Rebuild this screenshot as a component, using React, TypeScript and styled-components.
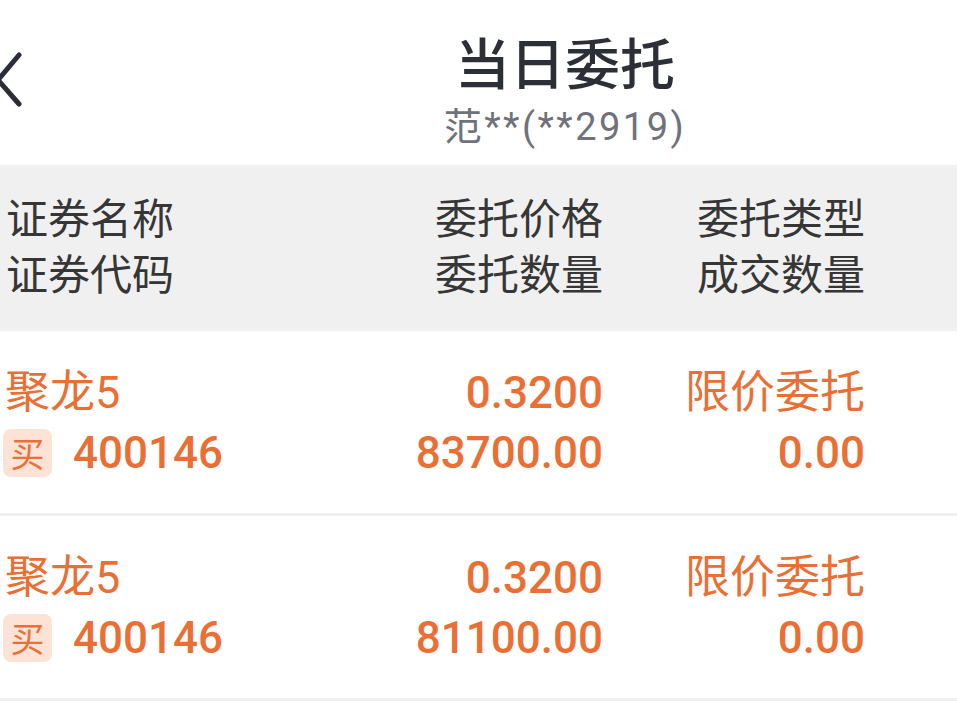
import React from "react";
import styled, { createGlobalStyle } from "styled-components";

const Global = createGlobalStyle`
  html, body { margin: 0; padding: 0; background: #ffffff; }
  body { font-family: Roboto, "Noto Sans CJK SC", sans-serif; }
  * { box-sizing: border-box; }
`;

const Page = styled.div`
  width: 957px;
  height: 708px;
  overflow: hidden;
  background: #fff;
`;

const Header = styled.header`
  height: 165px;
  display: grid;
  grid-template-columns: 173px 1fr;
  align-items: start;
`;

const Back = styled.div`
  display: flex;
  align-items: center;
  margin-left: -6px;
  margin-top: 50px;
`;

const TitleBlock = styled.div`
  display: flex;
  flex-direction: column;
  align-items: center;
  padding-top: 34px;
`;

const Title = styled.h1`
  margin: 0;
  font-family: Roboto, "Noto Sans CJK SC", sans-serif;
  font-size: 55px;
  line-height: 62px;
  font-weight: 500;
  color: #2c2f37;
`;

const Subtitle = styled.div`
  margin-top: 9px;
  font-family: Roboto, "Noto Sans CJK SC", sans-serif;
  font-size: 38px;
  line-height: 44px;
  color: #6f727a;
  letter-spacing: 2.5px;
`;

const Grid = styled.div<{ $head?: boolean }>`
  display: grid;
  grid-template-columns: 1fr 260px 262px;
  padding: ${(p) => (p.$head ? "27px 92px 27px 6px" : "32px 92px 30px 5px")};
  background: ${(p) => (p.$head ? "#f0f0f0" : "#fff")};
  color: ${(p) => (p.$head ? "#363636" : "#e96f35")};
`;

const Row = styled(Grid)`
  border-bottom: 3px solid #efefef;
`;

const Cell = styled.div<{ $right?: boolean; $head?: boolean }>`
  display: flex;
  flex-direction: column;
  align-items: ${(p) => (p.$right ? "flex-end" : "flex-start")};
  font-family: Roboto, "Noto Sans CJK SC", sans-serif;
  font-size: ${(p) => (p.$head ? "42px" : "45px")};
`;

const Line = styled.div<{ $h: number }>`
  height: ${(p) => p.$h}px;
  line-height: ${(p) => p.$h}px;
  display: flex;
  align-items: center;
  white-space: nowrap;
`;

const Badge = styled.span`
  display: inline-flex;
  align-items: center;
  justify-content: center;
  width: 49px;
  height: 48px;
  margin-left: -2px;
  margin-right: 21px;
  border-radius: 8px;
  background: #fde3d5;
  color: #e9703a;
  font-family: "Noto Sans CJK SC", sans-serif;
  font-size: 34px;
  line-height: 1;
`;

const Num = styled.span`
  font-size: 44px;
  font-weight: 500;
`;

const orders = [
  { name: "聚龙5", code: "400146", price: "0.3200", qty: "83700.00", type: "限价委托", done: "0.00" },
  { name: "聚龙5", code: "400146", price: "0.3200", qty: "81100.00", type: "限价委托", done: "0.00" },
];

export default function App() {
  return (
    <Page>
      <Global />
      <Header>
        <Back>
          <svg width="30" height="60" viewBox="0 0 30 60">
            <path d="M25 5 L4 30 L25 54" fill="none" stroke="#2b2e36" strokeWidth="5" strokeLinecap="round" strokeLinejoin="round" />
          </svg>
        </Back>
        <TitleBlock>
          <Title>当日委托</Title>
          <Subtitle>范**(**2919)</Subtitle>
        </TitleBlock>
      </Header>
      <Grid $head>
        <Cell $head>
          <Line $h={56}>证券名称</Line>
          <Line $h={56}>证券代码</Line>
        </Cell>
        <Cell $head $right>
          <Line $h={56}>委托价格</Line>
          <Line $h={56}>委托数量</Line>
        </Cell>
        <Cell $head $right>
          <Line $h={56}>委托类型</Line>
          <Line $h={56}>成交数量</Line>
        </Cell>
      </Grid>
      {orders.map((o, i) => (
        <Row key={i}>
          <Cell>
            <Line $h={60}>{o.name}</Line>
            <Line $h={60}>
              <Badge>买</Badge>
              <Num>{o.code}</Num>
            </Line>
          </Cell>
          <Cell $right>
            <Line $h={60}><Num>{o.price}</Num></Line>
            <Line $h={60}><Num>{o.qty}</Num></Line>
          </Cell>
          <Cell $right>
            <Line $h={60}>{o.type}</Line>
            <Line $h={60}><Num>{o.done}</Num></Line>
          </Cell>
        </Row>
      ))}
    </Page>
  );
}
